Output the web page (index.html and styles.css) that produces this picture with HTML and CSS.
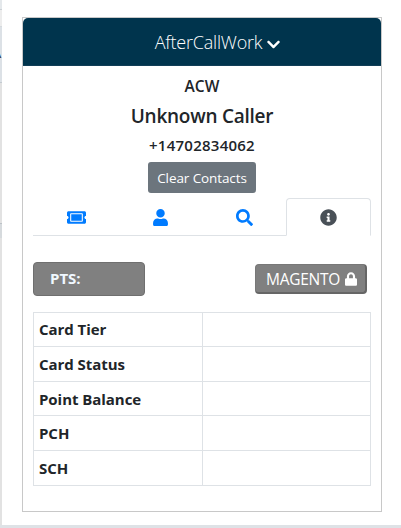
FILE: index.html
```html
<!DOCTYPE html>
<html lang="en">
<head>
<meta charset="utf-8">
<title>AfterCallWork</title>
<link rel="stylesheet" href="styles.css">
</head>
<body>
<div class="page">
  <aside class="edge"><div class="edge-top"></div><div class="edge-line"></div><div class="edge-blue"><span>A</span></div><div class="edge-gray"></div><div class="edge-band"></div></aside>
  <main class="panel">
    <header class="bar"><span class="state">AfterCallWork</span><svg class="chevron" viewBox="0 0 448 512"><path d="M207.029 381.476L12.686 187.132c-9.373-9.373-9.373-24.569 0-33.941l22.667-22.667c9.357-9.357 24.522-9.375 33.901-.04L224 284.505l154.745-154.021c9.379-9.335 24.544-9.317 33.901.04l22.667 22.667c9.373 9.373 9.373 24.569 0 33.941L240.971 381.476c-9.373 9.372-24.569 9.372-33.942 0z"/></svg></header>
    <section class="caller">
      <div class="acw"><span>ACW</span></div>
      <h1><span>Unknown Caller</span></h1>
      <div class="phone"><span>+14702834062</span></div>
      <button class="clear"><span>Clear Contacts</span></button>
    </section>
    <nav class="tabs">
      <a class="tab"><svg class="ticket" viewBox="0 0 576 512"><path d="M128 160h320v192H128V160zm400 96c0 26.51 21.49 48 48 48v96c0 26.51-21.49 48-48 48H48c-26.51 0-48-21.49-48-48v-96c26.51 0 48-21.49 48-48s-21.49-48-48-48v-96c0-26.51 21.49-48 48-48h480c26.51 0 48 21.49 48 48v96c-26.51 0-48 21.49-48 48zm-48-104c0-13.255-10.745-24-24-24H120c-13.255 0-24 10.745-24 24v208c0 13.255 10.745 24 24 24h336c13.255 0 24-10.745 24-24V152z"/></svg></a>
      <a class="tab"><svg class="user" viewBox="0 0 448 512"><path d="M224 256c70.7 0 128-57.3 128-128S294.700 0 224 0 96 57.300 96 128s57.300 128 128 128zm89.600 32h-16.700c-22.200 10.200-46.900 16-72.900 16s-50.600-5.800-72.900-16h-16.700C60.200 288 0 348.200 0 422.400V464c0 26.500 21.500 48 48 48h352c26.500 0 48-21.500 48-48v-41.600c0-74.200-60.200-134.400-134.400-134.400z"/></svg></a>
      <a class="tab"><svg class="search" viewBox="0 0 512 512"><path d="M505 442.700L405.300 343c-4.500-4.500-10.600-7-17-7H372c27.600-35.300 44-79.700 44-128C416 93.100 322.900 0 208 0S0 93.100 0 208s93.100 208 208 208c48.300 0 92.700-16.400 128-44v16.300c0 6.400 2.500 12.500 7 17l99.700 99.700c9.400 9.400 24.600 9.400 33.900 0l28.300-28.300c9.400-9.400 9.400-24.600.1-34zM208 336c-70.700 0-128-57.200-128-128 0-70.700 57.200-128 128-128 70.700 0 128 57.200 128 128 0 70.700-57.200 128-128 128z"/></svg></a>
      <a class="tab active"><svg class="info" viewBox="0 0 512 512"><path d="M256 8C119.043 8 8 119.083 8 256c0 136.997 111.043 248 248 248s248-111.003 248-248C504 119.083 392.957 8 256 8zm0 110c23.196 0 42 18.804 42 42s-18.804 42-42 42-42-18.804-42-42 18.804-42 42-42zm56 254c0 6.627-5.373 12-12 12h-88c-6.627 0-12-5.373-12-12v-24c0-6.627 5.373-12 12-12h12v-64h-12c-6.627 0-12-5.373-12-12v-24c0-6.627 5.373-12 12-12h64c6.627 0 12 5.373 12 12v100h12c6.627 0 12 5.373 12 12v24z"/></svg></a>
    </nav>
    <section class="actions">
      <div class="pts"><span>PTS:</span></div>
      <button class="magento"><span>MAGENTO</span><svg class="lock" viewBox="0 0 448 512"><path d="M400 224h-24v-72C376 68.200 307.800 0 224 0S72 68.200 72 152v72H48c-26.500 0-48 21.500-48 48v192c0 26.500 21.500 48 48 48h352c26.500 0 48-21.500 48-48V272c0-26.500-21.500-48-48-48zm-104 0H152v-72c0-39.700 32.300-72 72-72s72 32.300 72 72v72z"/></svg></button>
    </section>
    <table class="card">
      <tr><th><span>Card Tier</span></th><td></td></tr>
      <tr class="tall"><th><span>Card Status</span></th><td></td></tr>
      <tr><th><span>Point Balance</span></th><td></td></tr>
      <tr class="tall"><th><span>PCH</span></th><td></td></tr>
      <tr class="tall"><th><span>SCH</span></th><td></td></tr>
    </table>
  </main>
</div>
</body>
</html>
```
FILE: styles.css
```css
* { box-sizing: border-box; }
body {
  margin: 0;
  background: #fff;
  color: #212529;
  font-family: "Open Sans", "Noto Sans", sans-serif;
  font-size: 15px;
}
.page { display: flex; height: 528px; border-bottom: 3px solid #dee2e6; overflow: hidden; }
.edge { width: 2px; height: 525px; background: #e2e2e2; overflow: hidden; }
.edge-top { height: 9px; background: #e4e8eb; }
.edge-line { height: 18px; background: #ededed; border-top: 1px solid #cbd1d6; border-bottom: 1px solid #d5dade; }
.edge-blue { height: 56px; background: #dce1e6; border-bottom: 1px solid #c4cbd1; }
.edge-blue span { display: block; margin-left: -7px; padding-top: 17px; font-size: 13px; line-height: 18px; }
.edge-gray { height: 140px; }
.edge-band { height: 15px; background: #d6dadd; border-top: 1px solid #bcc2c7; }
.panel { width: 360px; height: 495px; margin: 17px 0 0 20px; border: 1px solid #c8c8c8; }
.bar {
  display: flex; align-items: center; justify-content: center; height: 48px; padding-left: 31px;
  background: #00344d; border-bottom: 1px solid #113e57; border-radius: 5px 5px 0 0; color: #fff;
}
.state { font-size: 18px; font-weight: 350; line-height: 24px; letter-spacing: -.2px; margin-top: 1px; }
.chevron { width: 13px; height: 15px; margin: 5px 0 0 5px; fill: #fff; }
.caller { display: flex; flex-direction: column; align-items: center; height: 127px; white-space: nowrap; }
.acw { height: 24px; margin-top: 8px; font-size: 15.5px; font-weight: 600; line-height: 24px; letter-spacing: .1px; }
h1 { height: 30px; margin: 3px 0 0; font-size: 19px; font-weight: 600; line-height: 30px; letter-spacing: -.25px; }
.phone { height: 24px; margin-top: 2px; font-weight: 600; line-height: 24px; letter-spacing: .25px; }
button { font-family: inherit; cursor: pointer; white-space: nowrap; }
.clear {
  width: 108px; height: 31px; margin-top: 5px; padding: 0; border: 0; border-radius: 3px;
  background: #6c757d; color: #fff; font-size: 13.5px; line-height: 32px; letter-spacing: -.1px;
}
.tabs { display: flex; height: 38px; margin: 5px 10px 0; width: 338px; border-bottom: 1px solid #dee2e6; }
.tab { display: flex; align-items: center; justify-content: center; width: 84px; padding-top: 1px; fill: #007bff; }
.tab:first-child { width: 85px; padding-left: 1px; }
.tab.active {
  width: 85px; height: 38px; padding-top: 0; border: 1px solid #dee2e6; border-bottom-color: #fff;
  border-radius: 4px 4px 0 0; background: #fff; fill: #495057;
}
.ticket { width: 19px; height: 17px; }
.user { width: 15px; height: 17px; }
.search { width: 17px; height: 17px; }
.info { width: 17px; height: 17px; }
.actions { display: flex; justify-content: space-between; margin: 26px 14px 0 10px; height: 34px; }
.pts {
  width: 112px; height: 34px; padding-left: 16px; border: 1px solid #6f6f6f; border-radius: 4px;
  background: #808080; color: #f0f8ff; font-size: 15px; font-weight: 700; line-height: 31px; letter-spacing: 0;
}
.magento {
  display: flex; align-items: center; width: 112px; height: 30px; margin-top: 2px; padding: 0 0 0 10px;
  border: solid #666; border-width: 1px 2px 2px 1px; border-top-color: #787878; border-left-color: #787878;
  border-radius: 4px; background: #808080; color: #fff; font-size: 15.5px; line-height: 24px; letter-spacing: -.25px;
}
.lock { width: 12px; height: 14px; margin-left: 5px; fill: #fff; }
.card { width: 338px; margin: 16px 0 0 10px; border-collapse: separate; border-spacing: 0; table-layout: fixed; border-top: 1px solid #dee2e6; border-left: 1px solid #dee2e6; }
.card th, .card td { height: 34px; padding: 0; border-right: 1px solid #dee2e6; border-bottom: 1px solid #dee2e6; }
.card .tall th, .card .tall td { height: 35px; }
.card th { width: 169px; padding-left: 5px; text-align: left; font-size: 15px; font-weight: 700; line-height: 22px; letter-spacing: -.05px; }
.card tr:first-child span { position: relative; top: -1px; }
```
